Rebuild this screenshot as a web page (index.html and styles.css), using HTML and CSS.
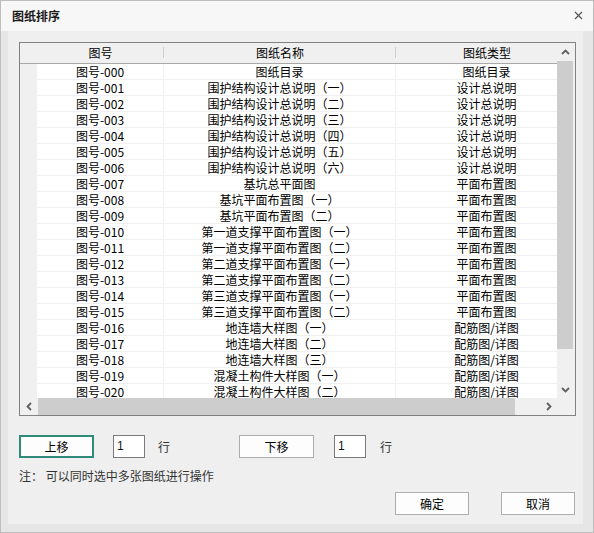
FILE: index.html
```html
<!DOCTYPE html>
<html lang="zh">
<head>
<meta charset="utf-8">
<title>图纸排序</title>
<link rel="stylesheet" href="styles.css">
</head>
<body>
<div class="win">
  <div class="titlebar">
    <span class="title">图纸排序</span>
    <svg class="close" width="9" height="9" viewBox="0 0 9 9"><path d="M1 1L8 8M8 1L1 8" stroke="#555" stroke-width="1.2" fill="none"/></svg>
  </div>
  <div class="panel">
    <div class="gridbox">
      <div class="top">
        <div class="viewport">
          <div class="row head">
            <div class="c g"></div>
            <div class="c sep">图号</div>
            <div class="c sep">图纸名称</div>
            <div class="c">图纸类型</div>
          </div>
          <div class="row"><div class="c g"></div><div class="c">图号-000</div><div class="c">图纸目录</div><div class="c">图纸目录</div></div>
          <div class="row"><div class="c g"></div><div class="c">图号-001</div><div class="c">围护结构设计总说明（一）</div><div class="c">设计总说明</div></div>
          <div class="row"><div class="c g"></div><div class="c">图号-002</div><div class="c">围护结构设计总说明（二）</div><div class="c">设计总说明</div></div>
          <div class="row"><div class="c g"></div><div class="c">图号-003</div><div class="c">围护结构设计总说明（三）</div><div class="c">设计总说明</div></div>
          <div class="row"><div class="c g"></div><div class="c">图号-004</div><div class="c">围护结构设计总说明（四）</div><div class="c">设计总说明</div></div>
          <div class="row"><div class="c g"></div><div class="c">图号-005</div><div class="c">围护结构设计总说明（五）</div><div class="c">设计总说明</div></div>
          <div class="row"><div class="c g"></div><div class="c">图号-006</div><div class="c">围护结构设计总说明（六）</div><div class="c">设计总说明</div></div>
          <div class="row"><div class="c g"></div><div class="c">图号-007</div><div class="c">基坑总平面图</div><div class="c">平面布置图</div></div>
          <div class="row"><div class="c g"></div><div class="c">图号-008</div><div class="c">基坑平面布置图（一）</div><div class="c">平面布置图</div></div>
          <div class="row"><div class="c g"></div><div class="c">图号-009</div><div class="c">基坑平面布置图（二）</div><div class="c">平面布置图</div></div>
          <div class="row"><div class="c g"></div><div class="c">图号-010</div><div class="c">第一道支撑平面布置图（一）</div><div class="c">平面布置图</div></div>
          <div class="row"><div class="c g"></div><div class="c">图号-011</div><div class="c">第一道支撑平面布置图（二）</div><div class="c">平面布置图</div></div>
          <div class="row"><div class="c g"></div><div class="c">图号-012</div><div class="c">第二道支撑平面布置图（一）</div><div class="c">平面布置图</div></div>
          <div class="row"><div class="c g"></div><div class="c">图号-013</div><div class="c">第二道支撑平面布置图（二）</div><div class="c">平面布置图</div></div>
          <div class="row"><div class="c g"></div><div class="c">图号-014</div><div class="c">第三道支撑平面布置图（一）</div><div class="c">平面布置图</div></div>
          <div class="row"><div class="c g"></div><div class="c">图号-015</div><div class="c">第三道支撑平面布置图（二）</div><div class="c">平面布置图</div></div>
          <div class="row"><div class="c g"></div><div class="c">图号-016</div><div class="c">地连墙大样图（一）</div><div class="c">配筋图/详图</div></div>
          <div class="row"><div class="c g"></div><div class="c">图号-017</div><div class="c">地连墙大样图（二）</div><div class="c">配筋图/详图</div></div>
          <div class="row"><div class="c g"></div><div class="c">图号-018</div><div class="c">地连墙大样图（三）</div><div class="c">配筋图/详图</div></div>
          <div class="row"><div class="c g"></div><div class="c">图号-019</div><div class="c">混凝土构件大样图（一）</div><div class="c">配筋图/详图</div></div>
          <div class="row"><div class="c g"></div><div class="c">图号-020</div><div class="c">混凝土构件大样图（二）</div><div class="c">配筋图/详图</div></div>
        </div>
        <div class="vscroll">
          <div class="arrow"><svg width="9" height="6" viewBox="0 0 9 6"><path d="M1 5L4.5 1.5L8 5" stroke="#606060" stroke-width="1.8" fill="none"/></svg></div>
          <div class="vthumb"></div>
          <div class="vtrack"></div>
          <div class="arrow"><svg width="9" height="6" viewBox="0 0 9 6"><path d="M1 1L4.5 4.5L8 1" stroke="#606060" stroke-width="1.8" fill="none"/></svg></div>
        </div>
      </div>
      <div class="hscroll">
        <div class="harrow"><svg width="6" height="9" viewBox="0 0 6 9"><path d="M5 1L1.5 4.5L5 8" stroke="#606060" stroke-width="1.8" fill="none"/></svg></div>
        <div class="hthumb"></div>
        <div class="htrack"></div>
        <div class="harrow"><svg width="6" height="9" viewBox="0 0 6 9"><path d="M1 1L4.5 4.5L1 8" stroke="#606060" stroke-width="1.8" fill="none"/></svg></div>
        <div class="corner"></div>
      </div>
    </div>

    <div class="controls">
      <button class="btn primary">上移</button>
      <div class="num">1</div>
      <span class="unit">行</span>
      <button class="btn down">下移</button>
      <div class="num">1</div>
      <span class="unit">行</span>
    </div>
    <div class="note">注：&nbsp;可以同时选中多张图纸进行操作</div>
    <div class="actions">
      <button class="btn">确定</button>
      <button class="btn">取消</button>
    </div>
  </div>
</div>
</body>
</html>
```

FILE: styles.css
```css
html, body {
  margin: 0;
  padding: 0;
}
body {
  font-family: "Noto Sans CJK SC", "Noto Sans", sans-serif;
  font-size: 12px;
  color: #000;
}
.win {
  width: 594px;
  height: 533px;
  box-sizing: border-box;
  border: 1px solid #bdbdbd;
  background: #e6e6e6;
  display: flex;
  flex-direction: column;
}
.titlebar {
  height: 30px;
  flex: none;
  background: #f7f7f7;
  display: flex;
  align-items: center;
  justify-content: space-between;
  padding: 0 10px 0 11px;
}
.title {
  font-weight: bold;
  font-size: 12px;
  color: #1a1a1a;
  line-height: 14px;
  margin-top: -1px;
}
.close {
  display: block;
  margin-top: -1px;
}
.panel {
  flex: 1;
  margin: 0 10px 8px 7px;
  background: #efefef;
  padding: 11px 6px 0 11px;
  display: flex;
  flex-direction: column;
}
.gridbox {
  width: 557px;
  height: 374px;
  box-sizing: border-box;
  border: 1px solid #828282;
  background: #f0f0f0;
  display: flex;
  flex-direction: column;
}
.top {
  display: flex;
  height: 355px;
}
.viewport {
  width: 537px;
  height: 355px;
  overflow: hidden;
  background: #fff;
}
.row {
  display: grid;
  grid-template-columns: 17px 127px 232px 182px;
  width: 558px;
  height: 16px;
}
.c {
  box-sizing: border-box;
  height: 16px;
  line-height: 15px;
  border-bottom: 1px solid #f0f0f0;
  border-right: 1px solid #f0f0f0;
  text-align: center;
  white-space: nowrap;
  overflow: hidden;
  background: #fff;
}
.c.g {
  background: #f0f0f0;
  border-bottom-color: #f0f0f0;
}
.row.head {
  height: 21px;
}
.row.head .c {
  height: 21px;
  line-height: 20px;
  background: #f0f0f0;
  border-right: none;
  border-bottom: 1px solid #a9a9a9;
  position: relative;
}
.row.head .c.sep::after {
  content: "";
  position: absolute;
  right: 0;
  top: 4px;
  bottom: 5px;
  width: 1px;
  background: #cfcfcf;
}
.vscroll {
  width: 18px;
  display: flex;
  flex-direction: column;
  background: #f0f0f0;
}
.arrow {
  height: 17px;
  width: 16px;
  display: flex;
  align-items: center;
  justify-content: center;
  flex: none;
}
.vthumb {
  width: 16px;
  height: 288px;
  background: #cdcdcd;
  flex: none;
  margin-top: 1px;
}
.vtrack {
  flex: 1;
}
.hscroll {
  height: 17px;
  display: flex;
  background: #f0f0f0;
}
.harrow {
  width: 17px;
  height: 17px;
  display: flex;
  align-items: center;
  justify-content: center;
  flex: none;
}
.hthumb {
  width: 477px;
  height: 17px;
  margin-left: 1px;
  background: #cdcdcd;
  flex: none;
}
.htrack {
  flex: 1;
}
.corner {
  width: 18px;
  flex: none;
  background: #f0f0f0;
}
.controls {
  display: flex;
  align-items: center;
  margin-top: 19px;
  height: 23px;
}
.btn {
  font-family: "Noto Sans CJK SC", "Noto Sans", sans-serif;
  font-size: 12px;
  font-weight: normal;
  color: #000;
  width: 75px;
  height: 23px;
  box-sizing: border-box;
  border: 1px solid #adadad;
  background: #fdfdfd;
  padding: 0;
  line-height: 20px;
  border-radius: 0;
}
.btn.primary {
  border: 2px solid #2f8a7a;
}
.num {
  width: 32px;
  height: 23px;
  box-sizing: border-box;
  border: 1px solid #7a7a7a;
  background: #fff;
  margin-left: 19px;
  padding: 0 0 0 3px;
  line-height: 20px;
  font-family: "Liberation Sans", sans-serif;
  color: #111;
}
.unit {
  margin-left: 13px;
  color: #333;
}
.btn.down {
  margin-left: 69px;
}
.down + .num {
  margin-left: 20px;
}
.down + .num + .unit {
  margin-left: 14px;
}
.note {
  margin-top: 10px;
  line-height: 16px;
  color: #333;
}
.actions {
  display: flex;
  justify-content: flex-end;
  gap: 32px;
  margin-top: 8px;
  margin-right: 2px;
}
.actions .btn {
  width: 74px;
  height: 23px;
}
```
